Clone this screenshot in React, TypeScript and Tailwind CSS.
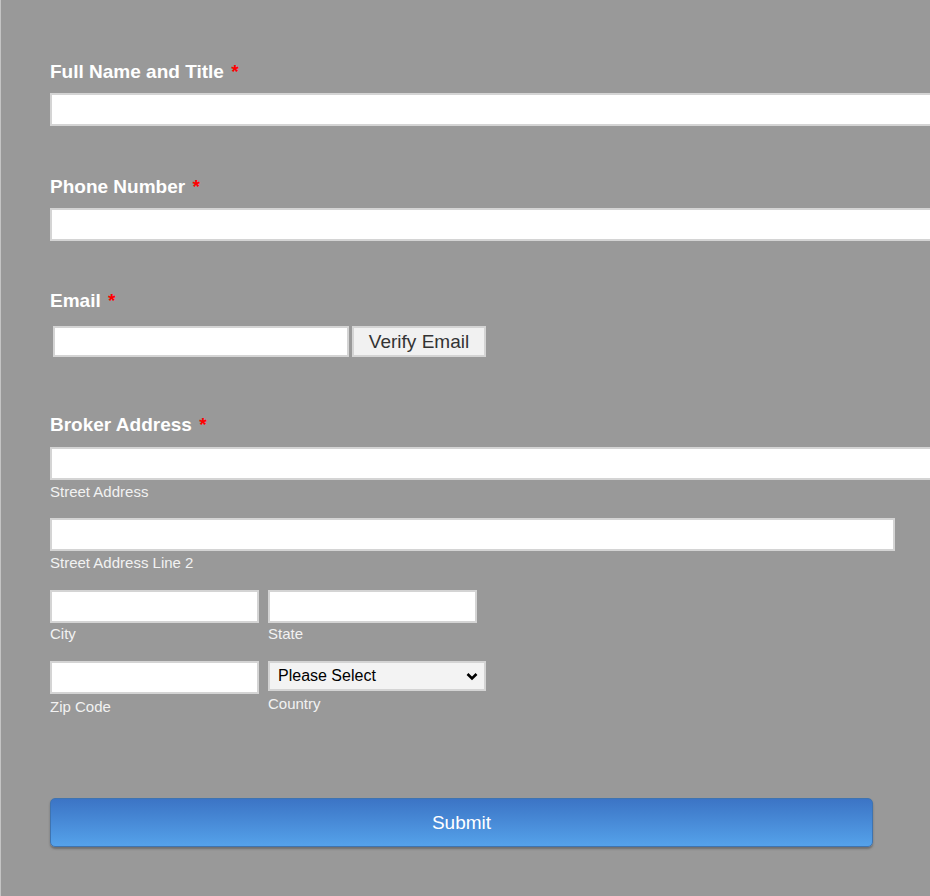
import React from 'react';

const font = { fontFamily: '"Liberation Sans", Arial, sans-serif' };

const Label = ({ text, className = '' }: { text: string; className?: string }) => (
  <div className={`text-[19px] leading-[21px] font-bold text-white ${className}`}>
    {text} <span className="text-[#ff0000] ml-[2px]">*</span>
  </div>
);

const Sub = ({ text, className = '' }: { text: string; className?: string }) => (
  <div className={`text-[15px] leading-[17px] text-[#f2f2f2] ${className}`}>{text}</div>
);

const inputCls = 'block bg-white border-2 border-[#d4d4d4] outline-none';

export default function App() {
  return (
    <div style={font} className="w-[930px] h-[896px] bg-[#999999] border-l border-[#c4c4c4] overflow-hidden">
      <div className="pl-[49px] pt-[61px]">
        {/* Full name */}
        <Label text="Full Name and Title" />
        <input className={`${inputCls} mt-[11px] w-[900px] h-[33px]`} />

        {/* Phone */}
        <Label text="Phone Number" className="mt-[50px]" />
        <input className={`${inputCls} mt-[11px] w-[900px] h-[33px]`} />

        {/* Email */}
        <Label text="Email" className="mt-[49px]" />
        <div className="flex items-start gap-[3px] mt-[15px] ml-[3px]">
          <input className={`${inputCls} w-[296px] h-[31px]`} />
          <button className="w-[134px] h-[31px] bg-[#f1f1f1] border-2 border-[#d4d4d4] text-[19px] leading-[20px] text-[#333333]">
            Verify Email
          </button>
        </div>

        {/* Broker address */}
        <Label text="Broker Address" className="mt-[57px]" />
        <input className={`${inputCls} mt-[12px] w-[900px] h-[33px]`} />
        <Sub text="Street Address" className="mt-[3px]" />

        <input className={`${inputCls} mt-[18px] w-[845px] h-[33px]`} />
        <Sub text="Street Address Line 2" className="mt-[3px]" />

        <div className="flex gap-[9px] mt-[19px]">
          <div>
            <input className={`${inputCls} w-[209px] h-[33px]`} />
            <Sub text="City" className="mt-[2px]" />
          </div>
          <div>
            <input className={`${inputCls} w-[209px] h-[33px]`} />
            <Sub text="State" className="mt-[2px]" />
          </div>
        </div>

        <div className="flex gap-[9px] mt-[19px]">
          <div>
            <input className={`${inputCls} w-[209px] h-[33px]`} />
            <Sub text="Zip Code" className="mt-[4px]" />
          </div>
          <div>
            <div className="relative w-[218px] h-[30px] bg-[#f3f3f3] border-2 border-[#d4d4d4] flex items-center">
              <span className="pl-[8px] text-[16px] leading-[18px] text-black">Please Select</span>
              <svg className="absolute right-[6px] top-[9px]" width="12" height="9" viewBox="0 0 12 9">
                <path d="M1.5 2 L6 6.5 L10.5 2" fill="none" stroke="#000" strokeWidth="2.6" />
              </svg>
            </div>
            <Sub text="Country" className="mt-[4px]" />
          </div>
        </div>

        {/* Submit */}
        <button className="mt-[83px] w-[823px] h-[49px] rounded-[5px] border border-[#3f74b0] bg-gradient-to-b from-[#3c74c5] to-[#55a2ea] shadow-[0_2px_2px_rgba(70,70,70,0.5)] text-white text-[19px] leading-[20px]">
          Submit
        </button>
      </div>
    </div>
  );
}
